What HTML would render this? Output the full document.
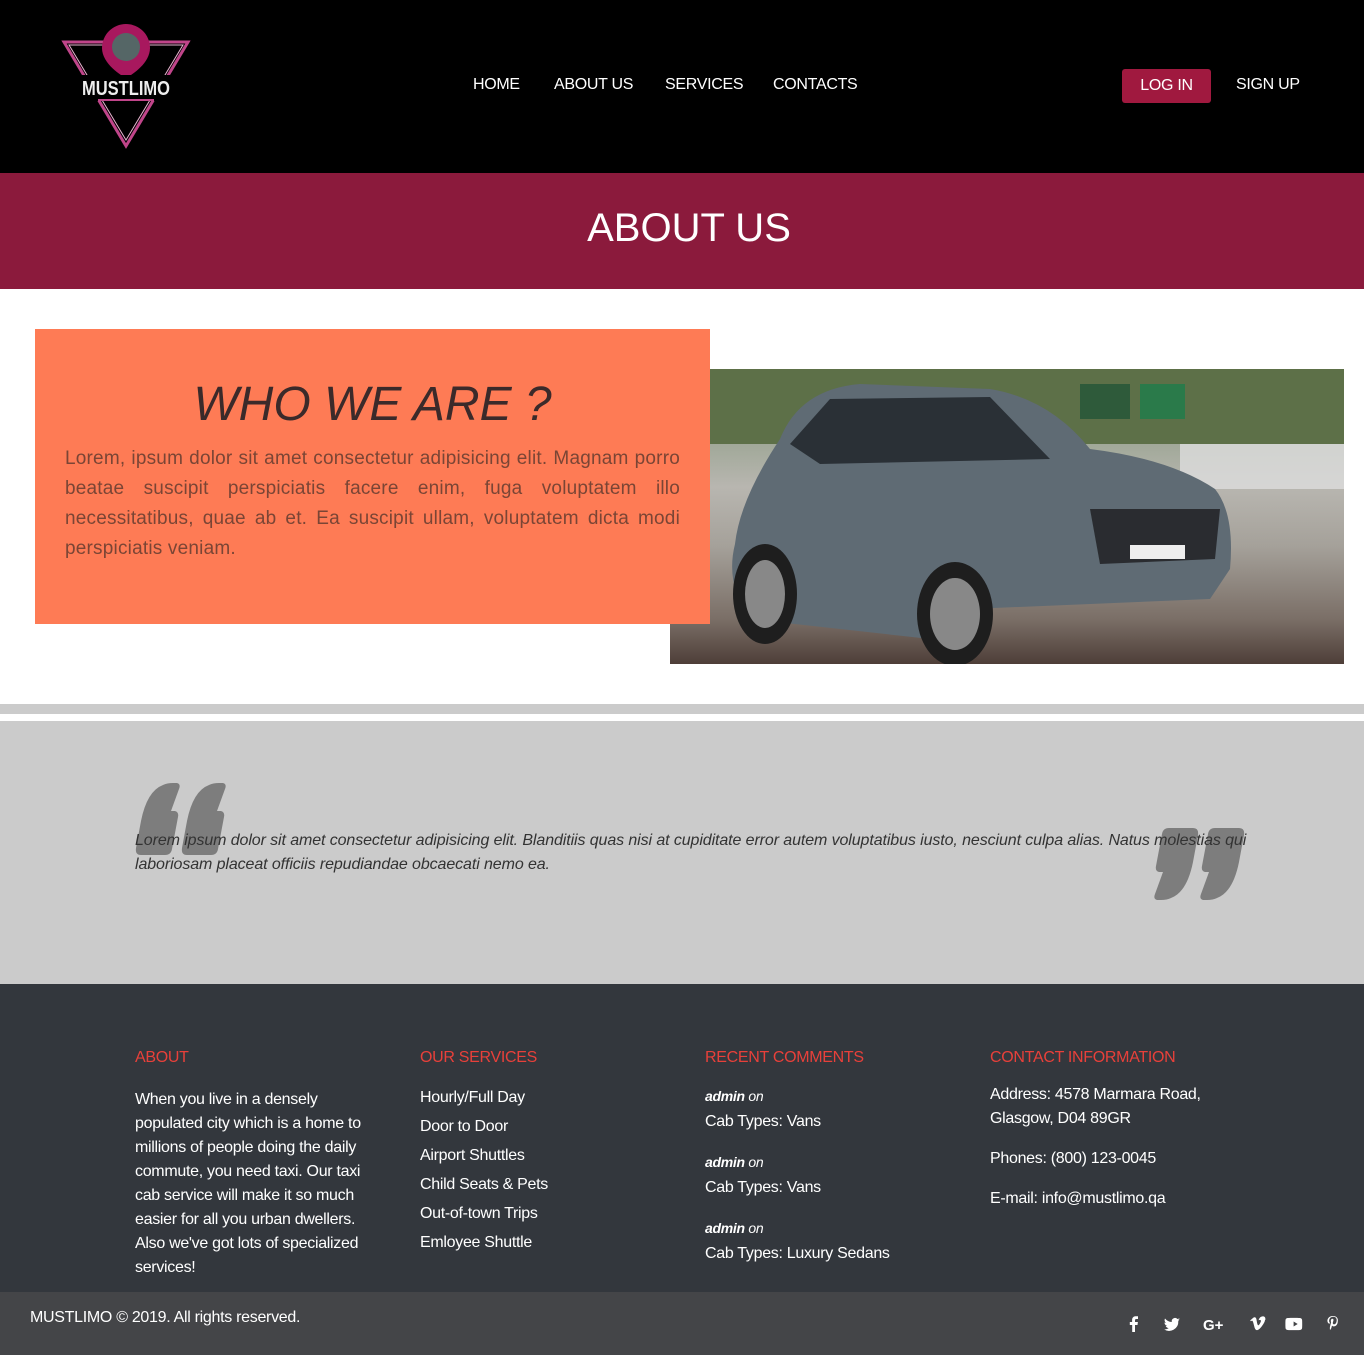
<!DOCTYPE html>
<html><head><meta charset="utf-8"><style>
*{margin:0;padding:0;box-sizing:border-box}
body{width:1364px;height:1355px;font-family:"Liberation Sans",sans-serif;background:#fff;position:relative;overflow:hidden}
.abs{position:absolute}
header{position:absolute;left:0;top:0;width:1364px;height:173px;background:#000}
nav a{position:absolute;top:76px;color:#fff;font-size:16px;text-decoration:none;letter-spacing:-0.3px}
.band{position:absolute;top:173px;left:0;width:1364px;height:116px;background:#8b1a3c;color:#fff;text-align:center;font-size:40px;line-height:110px;padding-left:14px}
.orange{position:absolute;left:35px;top:329px;width:675px;height:295px;background:#fe7b55;z-index:2}
.orange h2{font-weight:normal;font-style:italic;font-size:48px;color:#3b2a2a;text-align:center;margin-top:48px}
.orange p{margin:12px 30px 0 30px;font-size:19px;line-height:30px;color:#7a4535;text-align:justify;letter-spacing:0.2px}
.car{position:absolute;left:670px;top:369px;width:674px;height:295px;overflow:hidden;background:linear-gradient(#7a8a6a 0,#a0a898 25%,#b8b6b0 40%,#a5a19a 60%,#7a6e66 85%,#4e3e38 100%)}
.quote{position:absolute;left:0;top:721px;width:1364px;height:263px;background:#cbcbcb}
footer{position:absolute;left:0;top:984px;width:1364px;height:308px;background:#33373d;color:#fff}
.col{position:absolute;top:62px;font-size:16px;line-height:24px;letter-spacing:-0.3px}
.col h4{color:#e8403a;font-weight:normal;font-size:16px;margin-bottom:18px}
.bottom{position:absolute;left:0;top:1292px;width:1364px;height:63px;background:#444548;color:#fff;font-size:16px}
</style></head><body>
<header>
<svg class="abs" style="left:60px;top:20px" width="135" height="132" viewBox="0 0 135 132">
<polygon points="4,22 128,22 66,126" fill="none" stroke="#c0458a" stroke-width="3"/>
<polygon points="9,25 123,25 66,120" fill="none" stroke="#e9b4d0" stroke-width="1"/>
<path d="M66 4a24 24 0 0 1 24 24c0 16-20 28-24 30c-4-2-24-14-24-30a24 24 0 0 1 24-24z" fill="#a8185e"/>
<circle cx="66" cy="27" r="14" fill="#566"/>
<rect x="20" y="55" width="96" height="26" fill="#000"/>
<text x="66" y="75" text-anchor="middle" font-family="Liberation Sans" font-weight="bold" font-size="20" fill="#eee" textLength="88" lengthAdjust="spacingAndGlyphs">MUSTLIMO</text>
<line x1="38" y1="80" x2="94" y2="80" stroke="#c0458a" stroke-width="2"/>
</svg>
<nav><a style="left:473px">HOME</a><a style="left:554px">ABOUT US</a><a style="left:665px">SERVICES</a><a style="left:773px">CONTACTS</a></nav>
<div class="abs" style="left:1122px;top:69px;width:89px;height:34px;background:#a0193f;border-radius:3px;color:#fff;font-size:16px;text-align:center;line-height:34px;letter-spacing:-0.3px">LOG IN</div>
<div class="abs" style="left:1236px;top:76px;color:#fff;font-size:16px;letter-spacing:-0.3px">SIGN UP</div>
</header>
<div class="band">ABOUT US</div>
<div class="orange"><h2>WHO WE ARE ?</h2><p>Lorem, ipsum dolor sit amet consectetur adipisicing elit. Magnam porro beatae suscipit perspiciatis facere enim, fuga voluptatem illo necessitatibus, quae ab et. Ea suscipit ullam, voluptatem dicta modi perspiciatis veniam.</p></div>
<div class="car">
<svg width="674" height="295" viewBox="0 0 674 295">
<rect x="0" y="0" width="674" height="75" fill="#5d7048"/>
<rect x="410" y="15" width="50" height="35" fill="#2e5a3a"/><rect x="470" y="15" width="45" height="35" fill="#2a7a4a"/>
<rect x="510" y="75" width="164" height="45" fill="#ddd" opacity=".8"/>
<path d="M65 175 Q70 130 110 70 Q130 20 190 15 L320 20 Q380 30 420 80 Q500 90 545 120 Q565 145 560 200 L540 230 L300 240 L260 270 L80 250 Q55 215 65 175z" fill="#5f6b74"/>
<path d="M120 75 L160 30 L320 28 L380 90 L150 95z" fill="#2a3036"/>
<path d="M420 140 L550 140 L545 190 L430 195z" fill="#2a2c30"/>
<ellipse cx="95" cy="225" rx="32" ry="50" fill="#1e1e1e"/><ellipse cx="95" cy="225" rx="20" ry="34" fill="#888"/>
<ellipse cx="285" cy="245" rx="38" ry="52" fill="#1e1e1e"/><ellipse cx="285" cy="245" rx="25" ry="36" fill="#888"/>
<rect x="460" y="176" width="55" height="14" fill="#eee"/>
</svg></div>
<div class="abs" style="left:0;top:704px;width:1364px;height:10px;background:#cbcbcb"></div>
<div class="quote">
<svg class="abs" style="left:135px;top:62px" width="92" height="72" viewBox="0 0 92 72" fill="#7d7d7d">
<path id="q" d="M6 72Q0 72 1 65L6 38Q12 8 28 2Q32 0 38 0L42 0Q46 1 44 6L36 28L40 28Q44 29 43 34L37 66Q36 72 30 72Z"/>
<use href="#q" x="46"/></svg>
<svg class="abs" style="left:1153px;top:107px" width="92" height="72" viewBox="0 0 92 72" fill="#7d7d7d">
<g transform="rotate(180 46 36)"><path d="M6 72Q0 72 1 65L6 38Q12 8 28 2Q32 0 38 0L42 0Q46 1 44 6L36 28L40 28Q44 29 43 34L37 66Q36 72 30 72Z"/>
<path transform="translate(46 0)" d="M6 72Q0 72 1 65L6 38Q12 8 28 2Q32 0 38 0L42 0Q46 1 44 6L36 28L40 28Q44 29 43 34L37 66Q36 72 30 72Z"/></g></svg>
<p class="abs" style="left:135px;top:108px;width:1115px;font-style:italic;font-size:16px;line-height:24px;color:#333;letter-spacing:-0.1px">Lorem ipsum dolor sit amet consectetur adipisicing elit. Blanditiis quas nisi at cupiditate error autem voluptatibus iusto, nesciunt culpa alias. Natus molestias qui laboriosam placeat officiis repudiandae obcaecati nemo ea.</p>
</div>
<footer>
<div class="col" style="left:135px;width:245px"><h4>ABOUT</h4>When you live in a densely populated city which is a home to millions of people doing the daily commute, you need taxi. Our taxi cab service will make it so much easier for all you urban dwellers. Also we've got lots of specialized services!</div>
<div class="col" style="left:420px;line-height:29px"><h4 style="line-height:24px;margin-bottom:13px">OUR SERVICES</h4>Hourly/Full Day<br>Door to Door<br>Airport Shuttles<br>Child Seats &amp; Pets<br>Out-of-town Trips<br>Emloyee Shuttle</div>
<div class="col" style="left:705px"><h4>RECENT COMMENTS</h4>
<div style="font-style:italic;font-weight:bold;font-size:14px;margin-top:-4px">admin <span style="font-weight:normal">on</span></div><div style="margin:2px 0 16px">Cab Types: Vans</div>
<div style="font-style:italic;font-weight:bold;font-size:14px">admin <span style="font-weight:normal">on</span></div><div style="margin:2px 0 16px">Cab Types: Vans</div>
<div style="font-style:italic;font-weight:bold;font-size:14px">admin <span style="font-weight:normal">on</span></div><div style="margin-top:2px">Cab Types: Luxury Sedans</div></div>
<div class="col" style="left:990px;top:99px"><div>Address: 4578 Marmara Road,<br>Glasgow, D04 89GR</div><div style="margin-top:16px">Phones: (800) 123-0045</div><div style="margin-top:16px">E-mail: info@mustlimo.qa</div></div>
<div class="col" style="left:990px"><h4>CONTACT INFORMATION</h4></div>
</footer>
<div class="bottom"><div class="abs" style="left:30px;top:17px;letter-spacing:-0.3px">MUSTLIMO © 2019. All rights reserved.</div>
<svg class="abs" style="left:1124px;top:22px" width="230" height="20" viewBox="0 0 230 20" fill="#fff">
<path d="M11 18v-7h2.5l.4-3H11V6.3c0-.8.3-1.3 1.4-1.3H14V2.3c-.3 0-1.2-.1-2.2-.1-2.2 0-3.7 1.3-3.7 3.8V8H5.8v3h2.4v7z"/>
<path d="M56 5.5c-.6.3-1.2.4-1.9.5.7-.4 1.2-1 1.4-1.8-.6.4-1.3.6-2.1.8a3.3 3.3 0 0 0-5.6 3A9.3 9.3 0 0 1 41 4.5a3.3 3.3 0 0 0 1 4.4c-.5 0-1-.2-1.5-.4 0 1.6 1.1 2.9 2.6 3.2-.5.1-1 .2-1.5.1.4 1.3 1.6 2.3 3.1 2.3A6.6 6.6 0 0 1 40 15.4 9.3 9.3 0 0 0 54.3 7.1V6.7c.7-.4 1.2-1 1.7-1.2z"/>
<text x="79" y="16" font-family="Liberation Sans" font-weight="bold" font-size="15">G+</text>
<path transform="translate(14 0)" d="M127 6c-.1 1.5-1.1 3.5-3.1 6.1-2 2.7-3.7 4-5.1 4-.9 0-1.6-.8-2.2-2.5l-1.2-4.5c-.4-1.7-.9-2.5-1.4-2.5l-1.1.7-.7-.9 2.1-1.8c.9-.8 1.6-1.2 2.1-1.3 1.1-.1 1.8.7 2.1 2.3.3 1.8.5 2.9.6 3.4.4 1.5.7 2.3 1.2 2.3.3 0 .8-.5 1.5-1.6.7-1.1 1-1.9 1.1-2.4.1-.9-.3-1.4-1.1-1.4l-1.2.3c.8-2.6 2.3-3.8 4.5-3.8 1.6 0 2.4 1.1 2.3 3.3z"/>
<path transform="translate(12 0)" d="M164 4c1.2.1 2 .9 2.1 2.1.1 1.2.1 2.7.1 4s0 2.6-.1 3.8c-.1 1.2-.9 2-2.1 2.1-2.9.2-9.4.2-12.4 0-1.2-.1-2-.9-2.1-2.1-.1-1.2-.1-2.6-.1-3.8s0-2.8.1-4c.1-1.2.9-2 2.1-2.1 3-.2 9.5-.2 12.4 0zm-6.4 3.5v5l4.1-2.5z"/>
<path transform="translate(-3 0)" d="M212 2c-3.6 0-5.6 2.5-5.6 4.8 0 1.4.7 2.6 1.8 3 .2.1.4 0 .4-.2l.2-.7c0-.2 0-.3-.1-.4-.4-.4-.6-1-.6-1.7 0-2.2 1.6-4 4.1-4 2.2 0 3.5 1.4 3.5 3.2 0 2.4-1.1 4.400-2.6 4.4-.9 0-1.5-.7-1.3-1.6.2-1 .7-2.2.7-2.9 0-.7-.4-1.2-1.100-1.2-.9 0-1.6.9-1.6 2.2 0 .8.3 1.300.3 1.3l-1.1 4.6c-.3 1.3 0 3 0 3.1 0 .1.1.1.2 0 .1-.1 1-1.2 1.3-2.4l.5-2c.3.5 1 .9 1.8.9 2.4 0 4-2.2 4-5.1C217.4 4.2 215.3 2 212 2z"/>
</svg></div>
</body></html>
